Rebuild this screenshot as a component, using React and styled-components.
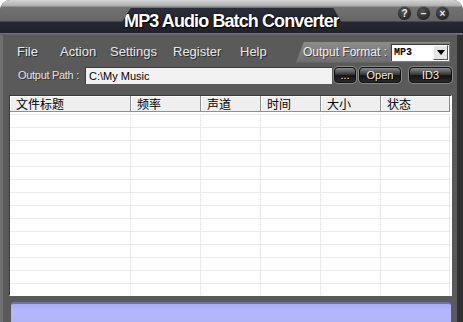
import styled, { createGlobalStyle } from 'styled-components';

const GlobalStyle = createGlobalStyle`
	html, body {
		margin: 0;
		padding: 0;
		background: #fff;
		overflow: hidden;
	}
`;

const menus = [
	{ label: 'File', w: 43 },
	{ label: 'Action', w: 50 },
	{ label: 'Settings', w: 63 },
	{ label: 'Register', w: 67 },
	{ label: 'Help', w: 40 },
];

const columns = ['文件标题', '频率', '声道', '时间', '大小', '状态'];
const colTemplate = '121px 70px 60px 60px 60px 69px';
const rows = Array.from({ length: 14 });

const App = () => {
	return (
		<>
			<GlobalStyle />
			<Window>
				<TitleBar>
					<span />
					<TitleTab>MP3 Audio Batch Converter</TitleTab>
					<Controls>
						<RoundButton>?</RoundButton>
						<RoundButton>–</RoundButton>
						<RoundButton>×</RoundButton>
					</Controls>
				</TitleBar>
				<Body>
					<MenuRow>
						{menus.map((m) => (
							<MenuItem key={m.label} $w={m.w}>
								{m.label}
							</MenuItem>
						))}
						<FormatPanel>
							<FormatLabel>Output Format :</FormatLabel>
							<Select>
								<SelectValue>MP3</SelectValue>
								<SelectArrow>
									<svg width='8' height='5' viewBox='0 0 8 5'>
										<path d='M0 0h8L4 5z' fill='#000' />
									</svg>
								</SelectArrow>
							</Select>
						</FormatPanel>
					</MenuRow>
					<PathRow>
						<PathLabel>Output Path :</PathLabel>
						<PathInput>C:\My Music</PathInput>
						<DarkButton $w={22} $ml={2}>
							...
						</DarkButton>
						<DarkButton $w={42} $ml={3}>
							Open
						</DarkButton>
						<DarkButton $w={43} $ml={8}>
							ID3
						</DarkButton>
					</PathRow>
					<TableFrame>
						<HeaderRow>
							{columns.map((c) => (
								<HeaderCell key={c}>{c}</HeaderCell>
							))}
						</HeaderRow>
						<RowArea>
							{rows.map((_, i) => (
								<Row key={i}>
									{columns.map((c) => (
										<Cell key={c} />
									))}
								</Row>
							))}
						</RowArea>
					</TableFrame>
					<StatusBar />
				</Body>
			</Window>
		</>
	);
};

export default App;

const Window = styled.div`
	width: 463px;
	height: 322px;
	display: flex;
	flex-direction: column;
	background: #5a5a5a;
	border-radius: 10px 10px 0 0;
	overflow: hidden;
	font-family: 'Liberation Sans', Arial, sans-serif;
`;

const TitleBar = styled.div`
	height: 35px;
	flex-shrink: 0;
	display: grid;
	grid-template-columns: 1fr auto 1fr;
	align-items: start;
	background: linear-gradient(
		to bottom,
		#d4d4d4 0px,
		#aeaeae 6px,
		#737373 7px,
		#666 21px,
		#262834 22px,
		#1f212b 33px,
		#7a7a7a 33px,
		#5c5c5c 35px
	);
`;

const TitleTab = styled.div`
	width: 232px;
	height: 25px;
	margin-top: 8px;
	padding-top: 1px;
	box-sizing: border-box;
	background: linear-gradient(to bottom, #2b2d3a, #1f212b);
	clip-path: polygon(0 100%, 15px 0, calc(100% - 14px) 0, 100% 100%);
	color: #fff;
	font-size: 18px;
	font-weight: bold;
	letter-spacing: -0.9px;
	line-height: 24px;
	text-align: center;
	text-shadow: 1px 1px 1px #000, 0 0 2px #000;
`;

const Controls = styled.div`
	display: flex;
	justify-content: flex-end;
	gap: 4px;
	margin-top: 6px;
	padding-right: 13px;
`;

const RoundButton = styled.div`
	width: 15px;
	height: 15px;
	box-sizing: border-box;
	border-radius: 50%;
	border: 1px solid #6a6a6a;
	background: radial-gradient(circle at 40% 35%, #555, #26262a 70%);
	color: #eee;
	font-size: 10px;
	font-weight: bold;
	line-height: 13px;
	text-align: center;
`;

const Body = styled.div`
	flex: 1;
	display: flex;
	flex-direction: column;
	border-left: 3px solid #6f6f6f;
	border-right: 6px solid #303030;
`;

const MenuRow = styled.div`
	height: 28px;
	display: flex;
	align-items: center;
	padding-left: 14px;
`;

const MenuItem = styled.div`
	width: ${(p) => p.$w}px;
	color: #e8e8e8;
	font-size: 13px;
	text-shadow: 1px 1px 0 #2a2a2a;
	padding-top: 4px;
`;

const FormatPanel = styled.div`
	margin-left: auto;
	margin-right: 7px;
	margin-top: 6px;
	height: 21px;
	display: flex;
	align-items: center;
	padding-left: 7px;
	background: linear-gradient(to bottom, #8c8c8c, #6c6c6c);
	clip-path: polygon(0 100%, 8px 0, 100% 0, 100% 100%);
`;

const FormatLabel = styled.div`
	color: #eee;
	font-size: 12px;
	padding-right: 3px;
	text-shadow: 1px 1px 0 #444;
`;

const Select = styled.div`
	width: 60px;
	height: 19px;
	box-sizing: border-box;
	display: flex;
	align-items: center;
	background: #fff;
	border: 1px solid #7a7a7a;
	box-shadow: inset 1px 1px 0 #404040;
`;

const SelectValue = styled.div`
	flex: 1;
	padding-left: 3px;
	font-family: 'Liberation Mono', 'DejaVu Sans Mono', monospace;
	font-size: 10px;
	font-weight: bold;
	color: #000;
`;

const SelectArrow = styled.div`
	width: 15px;
	height: 15px;
	margin-right: 1px;
	display: flex;
	align-items: center;
	justify-content: center;
	background: #e4e4e4;
	border: 1px solid #fff;
	border-right-color: #555;
	border-bottom-color: #555;
	box-sizing: border-box;
`;

const PathRow = styled.div`
	height: 24px;
	display: flex;
	align-items: center;
	padding-left: 15px;
`;

const PathLabel = styled.div`
	width: 67px;
	color: #e2e2e2;
	font-size: 11px;
	letter-spacing: -0.3px;
	text-shadow: 1px 1px 0 #333;
`;

const PathInput = styled.div`
	width: 247px;
	height: 17px;
	box-sizing: border-box;
	padding-left: 3px;
	background: #f2f2f2;
	border-top: 1px solid #3a3a3a;
	border-left: 1px solid #3a3a3a;
	color: #000;
	font-size: 11px;
	line-height: 16px;
`;

const DarkButton = styled.div`
	width: ${(p) => p.$w}px;
	height: 16px;
	margin-left: ${(p) => p.$ml}px;
	box-sizing: border-box;
	border: 1px solid #111;
	border-radius: 4px;
	background: linear-gradient(to bottom, #8a8a8a 0%, #3a3a3a 45%, #141414 55%, #2a2a2a 100%);
	box-shadow: 0 0 0 1px #888;
	color: #f0f0f0;
	font-size: 11px;
	line-height: 14px;
	text-align: center;
	text-shadow: 1px 1px 0 #000;
`;

const TableFrame = styled.div`
	margin: 8px 5px 0 6px;
	height: 201px;
	box-sizing: border-box;
	border: 1px solid #fff;
	border-top-color: #3a3a3a;
	border-left-color: #3a3a3a;
	background: #fff;
	overflow: hidden;
`;

const HeaderRow = styled.div`
	display: grid;
	grid-template-columns: ${colTemplate};
	height: 16px;
`;

const HeaderCell = styled.div`
	box-sizing: border-box;
	background: #efefef;
	border-right: 1px solid #8f8f8f;
	border-bottom: 1px solid #8f8f8f;
	box-shadow: inset 1px 1px 0 #fff;
	padding-left: 6px;
	font-family: 'Noto Sans CJK SC', sans-serif;
	font-size: 12px;
	line-height: 15px;
	color: #000;
`;

const RowArea = styled.div`
	padding-top: 2px;
`;

const Row = styled.div`
	display: grid;
	grid-template-columns: ${colTemplate};
	height: 13px;
	box-sizing: border-box;
	border-top: 1px solid #ebebeb;
`;

const Cell = styled.div`
	border-right: 1px solid #ebebeb;
`;

const StatusBar = styled.div`
	flex: 1;
	margin: 6px 6px 0 8px;
	border-top: 2px solid #6e72a8;
	border-radius: 3px 3px 0 0;
	background: linear-gradient(to bottom, #a8acf0, #b3b7fb 40%, #b0b4f8);
`;
